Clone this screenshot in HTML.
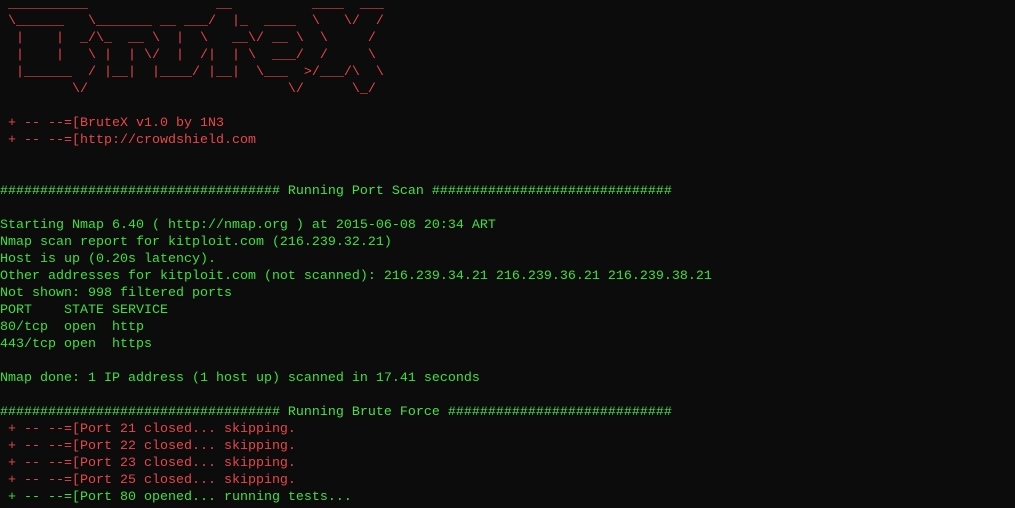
<!DOCTYPE html>
<html><head><meta charset="utf-8"><style>
html,body{margin:0;padding:0;background:#0c0c0c;width:1015px;height:508px;overflow:hidden}
pre{margin:0;position:absolute;left:0;top:-4px;font-family:"Liberation Mono",monospace;font-size:13.33px;line-height:17px;color:#3ee03e;white-space:pre}
.r{color:#e8464a}
.g{color:#48e048}
</style></head><body><pre><span class="r"> __________                __          ____  ___
 \______   \_______ __ ___/  |_  ____  \   \/  /
  |    |  _/\_  __ \  |  \   __\/ __ \  \     / 
  |    |   \ |  | \/  |  /|  | \  ___/  /     \ 
  |______  / |__|  |____/ |__|  \___  >/___/\  \
         \/                         \/      \_/

 + -- --=[BruteX v1.0 by 1N3
 + -- --=[http://crowdshield.com</span>


<span class="g">################################### Running Port Scan ##############################</span>

Starting Nmap 6.40 ( http://nmap.org ) at 2015-06-08 20:34 ART
Nmap scan report for kitploit.com (216.239.32.21)
Host is up (0.20s latency).
Other addresses for kitploit.com (not scanned): 216.239.34.21 216.239.36.21 216.239.38.21
Not shown: 998 filtered ports
PORT    STATE SERVICE
80/tcp  open  http
443/tcp open  https

Nmap done: 1 IP address (1 host up) scanned in 17.41 seconds

<span class="g">################################### Running Brute Force ############################</span>
<span class="r"> + -- --=[Port 21 closed... skipping.
 + -- --=[Port 22 closed... skipping.
 + -- --=[Port 23 closed... skipping.
 + -- --=[Port 25 closed... skipping.</span>
 + -- --=[Port 80 opened... running tests...
</pre></body></html>
